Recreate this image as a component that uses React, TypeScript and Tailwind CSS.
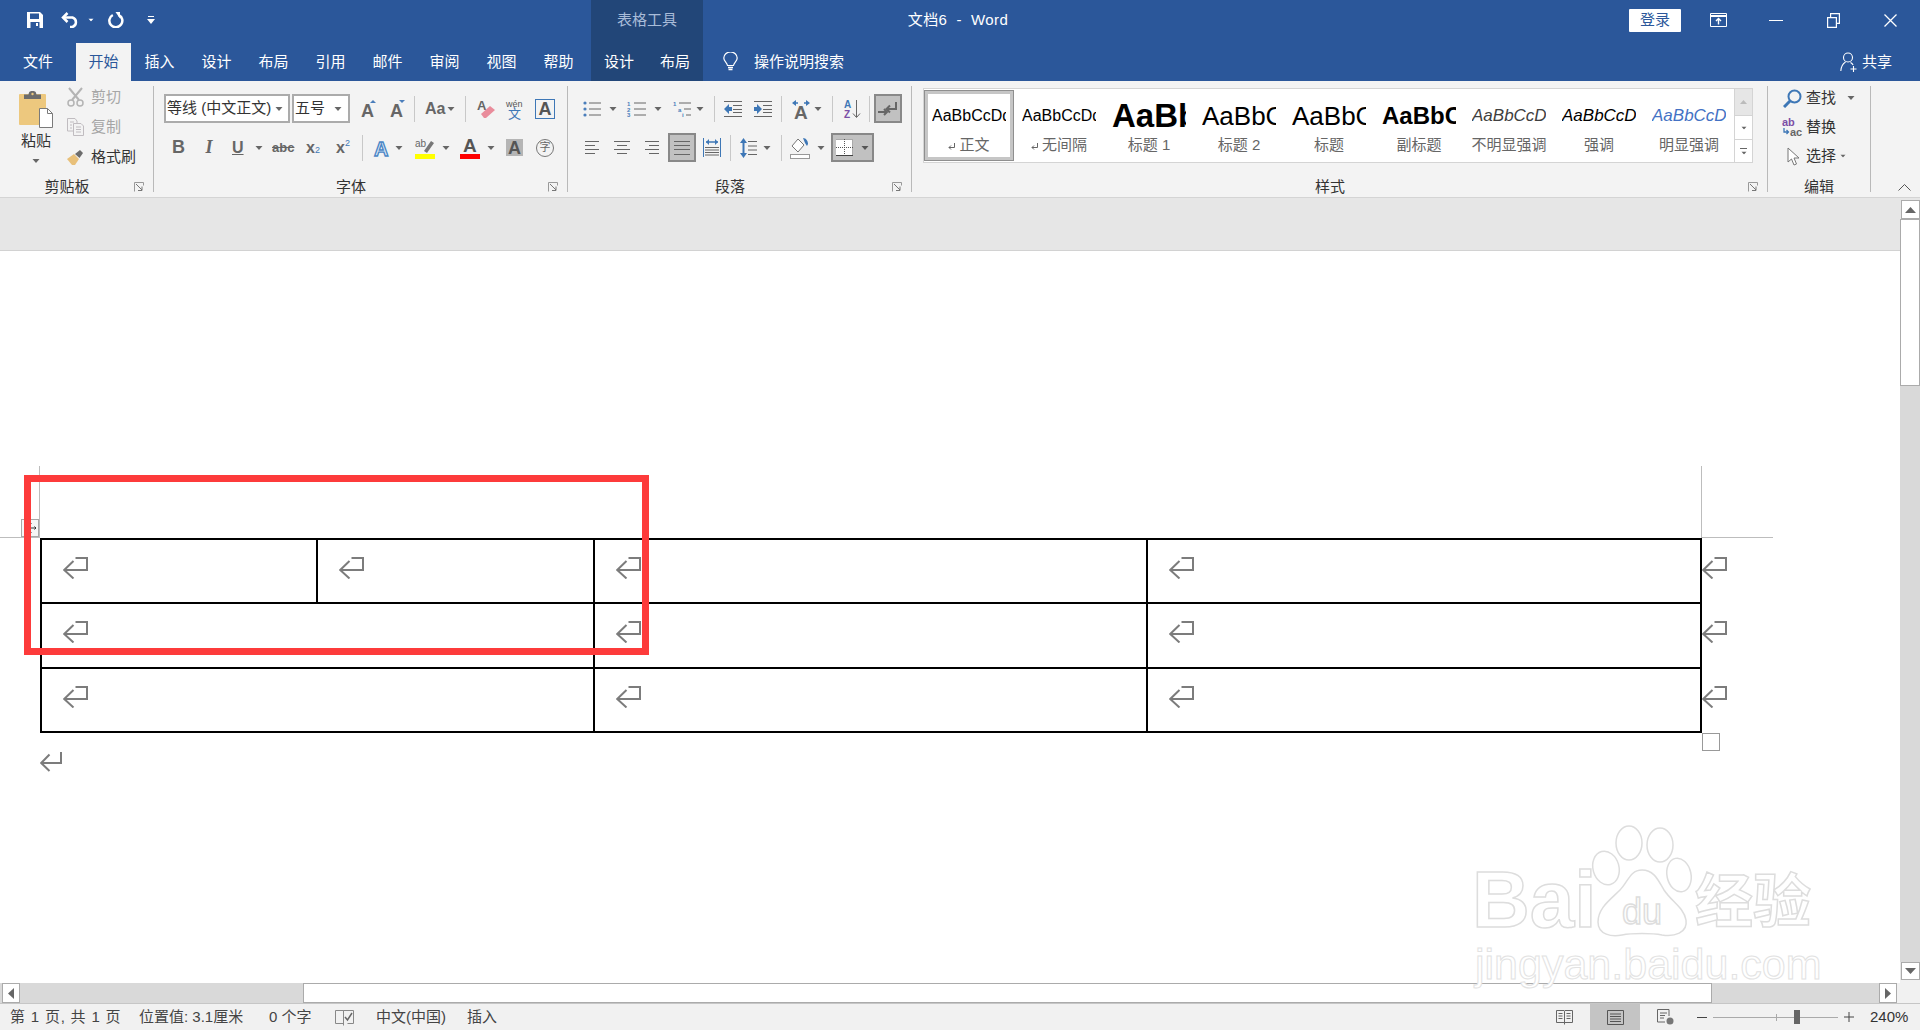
import React from "react";

type P = { className?: string };

const Caret = ({ className = "", color = "#666" }: P & { color?: string }) => (
  <svg className={`shrink-0 ${className}`} width="8" height="4" viewBox="0 0 8 4">
    <path d="M.5 0h7L4 4z" fill={color} />
  </svg>
);
const Sep = ({ className = "" }: P) => <div className={`w-px h-[26px] shrink-0 bg-[#c8c8c8] ${className}`} />;

const Launcher = () => (
  <div className="w-[19px] h-[14px] flex items-center shrink-0">
    <svg width="10" height="10" viewBox="0 0 10 10" fill="none" stroke="#777">
      <path d="M.5 9.500v-9h9v3" stroke="#999" />
      <path d="M2 2l6 6M8 4.500V8.500H4" />
    </svg>
  </div>
);

const Ret = ({ className = "" }: P) => (
  <svg className={`shrink-0 ${className}`} width="25" height="22" viewBox="0 0 25 22" fill="none" stroke="#7c7c7c" strokeWidth="2">
    <path d="M12.500 1H24V13H1" />
    <path d="M10.500 4L1.200 13l9.300 8.500" />
  </svg>
);

const Lines = ({ rows, w, h, color = "#666", className = "" }: P & { rows: [number, number, number][]; w: number; h: number; color?: string }) => (
  <svg className={`shrink-0 ${className}`} width={w} height={h} viewBox={`0 0 ${w} ${h}`} stroke={color} strokeWidth="1">
    {rows.map(([y, a, b], i) => (
      <path key={i} d={`M${a} ${y + 0.5}H${b}`} />
    ))}
  </svg>
);

const Letter = ({ ch = "A", size = 19, w = 14, h = 20, x, y = 17, fill = "#666", weight = "bold", extra }: { ch?: string; size?: number; w?: number; h?: number; x?: number; y?: number; fill?: string; weight?: string; extra?: React.ReactNode }) => (
  <svg className="shrink-0 overflow-visible" width={w} height={h} viewBox={`0 0 ${w} ${h}`}>
    <text x={x ?? 0} y={y} fontSize={size} fontWeight={weight} fill={fill} fontFamily="Liberation Sans">
      {ch}
    </text>
    {extra}
  </svg>
);

const Item = ({ preview, label, ret, selected }: { preview: React.ReactNode; label: string; ret?: boolean; selected?: boolean }) => (
  <div className={`w-[90px] h-[71px] shrink-0 flex flex-col items-center box-border ${selected ? "border border-[#8f8f8f] outline-[3px] outline-[#c6c6c6] outline-offset-[-4px] pt-[7px]" : "pt-[8px]"}`}>
    <div className="w-[74px] h-[36px] leading-[36px] overflow-hidden whitespace-nowrap text-black">{preview}</div>
    <div className="h-[20px] leading-[20px] mt-[1px] flex items-center text-[#666] text-[15px] whitespace-nowrap">
      {ret && (
        <svg className="mr-[4px] mt-[3px]" width="7" height="7" viewBox="0 0 7 7" fill="none" stroke="#666">
          <path d="M6.500 0v4.500H1M3 2.500L1 4.500 3 6.500" />
        </svg>
      )}
      {label}
    </div>
  </div>
);

export default function App() {
  return (
    <div className="relative w-[1920px] h-[1030px] overflow-hidden flex flex-col bg-white text-[15px] text-[#444] font-['Liberation_Sans','Noto_Sans_CJK_SC',sans-serif]">
      {/* Title bar */}
      <div className="h-[43px] shrink-0 flex items-start bg-[#2b579a] text-white">
        <div className="w-[591px] h-[40px] flex items-center shrink-0">
          <svg className="ml-[27px]" width="16" height="16" viewBox="0 0 16 16">
            <path fill="#fff" d="M0 0h13l3 3v13H0z" />
            <path fill="#2b579a" d="M3 1.500h9V7H3zM3.500 10h9v6h-9z" />
            <path fill="#fff" d="M9 11h2v3H9z" />
          </svg>
          <svg className="ml-[18px]" width="19" height="16" viewBox="0 0 19 16" fill="none" stroke="#fff" strokeWidth="2.500">
            <path d="M2 5.500h9.500a5 5 0 0 1 0 9.500H9" />
            <path d="M6.500 1L2 5.500 6.500 10" />
          </svg>
          <Caret className="ml-[7px] scale-75" color="#fff" />
          <svg className="ml-[13px]" width="16" height="16" viewBox="0 0 16 16" fill="none" stroke="#fff" strokeWidth="2.500">
            <path d="M4.800 3A6.500 6.500 0 1 0 10.500 2.800" />
            <path fill="#fff" stroke="none" d="M7.500 0h4.500v6.500z" />
          </svg>
          <svg className="ml-[23px]" width="8" height="8" viewBox="0 0 8 8" fill="#fff">
            <path d="M1 0h6v1H1zM0 3h8L4 8z" />
          </svg>
        </div>
        <div className="w-[112px] h-[43px] pb-[3px] shrink-0 bg-[#224678] flex items-center justify-center text-[#a9bcd8] text-[15px]">表格工具</div>
        <div className="w-[510px] h-[40px] shrink-0 flex items-center justify-center whitespace-pre text-[15px] tracking-[0.4px]">文档6  -  Word</div>
        <div className="flex-1 h-[40px] flex items-center justify-end">
          <div className="w-[52px] h-[23px] bg-white text-[#2b579a] rounded-[1px] flex items-center justify-center text-[15px]">登录</div>
          <svg className="ml-[29px]" width="17" height="14" viewBox="0 0 17 14" fill="none" stroke="#fff">
            <path d="M.5.500h16v13H.5z" />
            <path d="M.5 3h16" strokeWidth="2" />
            <path d="M8.500 11.500V6M6 8l2.500-2.500L11 8" strokeWidth="1.400" />
          </svg>
          <div className="ml-[42px] w-[14px] h-[1px] bg-white" />
          <svg className="ml-[44px]" width="13" height="15" viewBox="0 0 13 15" fill="none" stroke="#fff" strokeWidth="1.200">
            <path d="M.6 4.600h8.800v9.800H.6z" />
            <path d="M3.600 4.500V.6h8.800v9.800H9.500" />
          </svg>
          <svg className="ml-[44px] mr-[23px]" width="13" height="13" viewBox="0 0 13 13" stroke="#fff" strokeWidth="1.300">
            <path d="M.5.500l12 12M12.500.5l-12 12" />
          </svg>
        </div>
      </div>

      {/* Tabs */}
      <div className="h-[38px] shrink-0 flex items-stretch bg-[#2b579a] text-white text-[15px]">
        <div className="w-[76px] flex items-center justify-center">文件</div>
        <div className="w-[55px] flex items-center justify-center bg-[#f3f3f3] text-[#2b579a]">开始</div>
        <div className="w-[57px] flex items-center justify-center">插入</div>
        <div className="w-[57px] flex items-center justify-center">设计</div>
        <div className="w-[57px] flex items-center justify-center">布局</div>
        <div className="w-[57px] flex items-center justify-center">引用</div>
        <div className="w-[57px] flex items-center justify-center">邮件</div>
        <div className="w-[57px] flex items-center justify-center">审阅</div>
        <div className="w-[57px] flex items-center justify-center">视图</div>
        <div className="w-[57px] flex items-center justify-center">帮助</div>
        <div className="w-[4px]" />
        <div className="w-[112px] flex bg-[#224678]">
          <div className="w-[56px] flex items-center justify-center">设计</div>
          <div className="w-[56px] flex items-center justify-center">布局</div>
        </div>
        <svg className="ml-[20px] self-center" width="15" height="20" viewBox="0 0 15 20" fill="none" stroke="#fff" strokeWidth="1.200">
          <path d="M4.500 13.500C4 10.500.8 9.500.8 6a6.700 6 0 0 1 13.400 0c0 3.500-3.200 4.500-3.700 7.500z" />
          <path d="M5 15.500h5M5.500 17.500h4" strokeWidth="1.500" />
        </svg>
        <div className="ml-[16px] flex items-center">操作说明搜索</div>
        <div className="ml-auto mr-[28px] flex items-center">
          <svg width="18" height="20" viewBox="0 0 18 20" fill="none" stroke="#fff" strokeWidth="1.100">
            <circle cx="8" cy="5.500" r="4.500" />
            <path d="M5.500 10C2.500 12 1 15 .8 19M10.500 10.500c1 .5 2 1.500 2.600 2.500M13.500 14v6M10.500 17h6" />
          </svg>
          <span className="ml-[4px]">共享</span>
        </div>
      </div>

      {/* Ribbon */}
      <div className="h-[117px] shrink-0 flex py-[5px] bg-[#f3f3f3] border-b border-[#d4d4d4] box-border">
        {/* Clipboard */}
        <div className="w-[154px] h-[106px] shrink-0 flex flex-col border-r border-[#b9b9b9] box-border">
          <div className="flex h-[88px]">
            <div className="w-[67px] pl-[5px] flex flex-col items-center pt-[4px] shrink-0">
              <svg width="34" height="38" viewBox="0 0 34 38">
                <rect x="0" y="4" width="27" height="31" rx="1" fill="#edc87e" />
                <path d="M5 9V4.500h4.500C10 2 10.500 1 13.500 1s3.500 1 4 3.500H22V9z" fill="#6c6c6c" />
                <circle cx="13.500" cy="4" r="1.200" fill="#edc87e" />
                <path d="M20.500 18.500h8l5 5v14h-13z" fill="#fff" stroke="#7a7a7a" />
                <path d="M28.500 18.500v5h5" fill="none" stroke="#7a7a7a" />
              </svg>
              <div className="mt-[3px] h-[20px] leading-[20px] text-[#333]">粘贴</div>
              <Caret className="mt-[8px]" />
            </div>
            <div className="flex flex-col gap-[8px]">
              <div className="h-[22px] flex items-center text-[#a6a6a6]">
                <svg width="17" height="20" viewBox="0 0 17 20" fill="none" stroke="#b4b4b4" strokeWidth="1.500">
                  <path d="M2 1l10 12M15 1L5 13" strokeWidth="2" />
                  <circle cx="4" cy="16" r="3" />
                  <circle cx="13" cy="16" r="3" />
                </svg>
                <span className="ml-[7px]">剪切</span>
              </div>
              <div className="h-[22px] flex items-center text-[#a6a6a6]">
                <svg width="17" height="18" viewBox="0 0 17 18" fill="none" stroke="#c0bcc0">
                  <path d="M.5.500H8l2 2.500v10H.5z" />
                  <path d="M6.500 5.500H14l2.500 2.500v9.500h-10z" fill="#f3f3f3" />
                  <path d="M3 4h4M3 7h2M3 10h2M9 9h5M9 11.500h5M9 14h5" />
                </svg>
                <span className="ml-[7px]">复制</span>
              </div>
              <div className="h-[22px] flex items-center text-[#333]">
                <svg width="17" height="16" viewBox="0 0 17 16">
                  <path d="M0 10l7-5 5 5-4 6H5z" fill="#e8c07a" />
                  <path d="M8 5l5-4 3 3-3.500 5z" fill="#6c6c6c" />
                </svg>
                <span className="ml-[7px]">格式刷</span>
              </div>
            </div>
          </div>
          <div className="mt-auto -mb-[2px] h-[14px] flex items-center">
            <div className="flex-1 text-center leading-[14px] text-[#333]">剪贴板</div>
            <Launcher />
          </div>
        </div>

        {/* Font */}
        <div className="w-[414px] h-[106px] shrink-0 flex flex-col border-r border-[#b9b9b9] box-border">
          <div className="mt-[8px] h-[29px] flex items-center">
            <div className="ml-[10px] w-[126px] h-[29px] box-border border-2 border-[#ababab] bg-white flex items-center pl-[1px] pr-[5px] justify-between text-[#333] whitespace-nowrap">
              <span>等线 (中文正文)</span>
              <Caret />
            </div>
            <div className="ml-[2px] w-[58px] h-[29px] box-border border-2 border-[#ababab] bg-white flex items-center pl-[1px] pr-[6px] justify-between text-[#333]">
              <span>五号</span>
              <Caret />
            </div>
            <div className="ml-[11px]">
              <Letter extra={<path d="M9 4h6l-3-3z" fill="#4a7ebb" />} y={18} size={18} />
            </div>
            <div className="ml-[15px]">
              <Letter extra={<path d="M9 1h6l-3 3z" fill="#4a7ebb" />} y={18} size={18} />
            </div>
            <Sep className="ml-[10px]" />
            <div className="ml-[10px]">
              <Letter ch="Aa" size={16} w={18} y={15} />
            </div>
            <Caret className="ml-[4px]" />
            <Sep className="ml-[10px]" />
            <svg className="ml-[11px] overflow-visible" width="18" height="20" viewBox="0 0 18 20">
              <text x="0" y="11" fontSize="13" fontWeight="bold" fill="#666" fontFamily="Liberation Sans">A</text>
              <path d="M4 15l9-8 5 4-9 8H7z" fill="#e98c9b" />
            </svg>
            <svg className="ml-[11px] overflow-visible" width="17" height="20" viewBox="0 0 17 20">
              <text x="0" y="8" fontSize="9" fill="#555" fontFamily="Liberation Sans">wén</text>
              <text x="2" y="19" fontSize="13" fill="#3e77b6">文</text>
            </svg>
            <div className="ml-[12px] w-[20px] h-[20px] box-border border border-[#3e77b6] flex items-center justify-center text-[#555] text-[18px] font-bold leading-none">A</div>
          </div>
          <div className="mt-[10px] h-[29px] flex items-center text-[#666]">
            <div className="ml-[18px] w-[10px] text-center font-bold text-[18px] font-['Liberation_Sans']">B</div>
            <div className="ml-[22px] w-[10px] text-center italic font-bold text-[18px] font-['Liberation_Serif']">I</div>
            <div className="ml-[18px] w-[10px] text-center font-bold text-[16px] leading-[19px] underline font-['Liberation_Sans']">U</div>
            <Caret className="ml-[13px]" />
            <div className="ml-[9px] w-[20px] text-center text-[13px] font-bold line-through">abc</div>
            <div className="ml-[14px] w-[15px] flex items-baseline font-bold text-[16px]">x<span className="text-[9px] text-[#3e77b6] font-normal">2</span></div>
            <div className="ml-[15px] w-[15px] flex font-bold text-[16px] leading-[20px] h-[20px]">x<span className="text-[9px] leading-[10px] text-[#3e77b6] font-normal">2</span></div>
            <Sep className="ml-[11px]" />
            <svg className="ml-[10px] overflow-visible" width="16" height="20" viewBox="0 0 16 20">
              <text x="1" y="18" fontSize="20" fontWeight="bold" fill="#dce8f5" stroke="#4a86c5" strokeWidth="1.300" fontFamily="Liberation Sans">A</text>
            </svg>
            <Caret className="ml-[6px]" />
            <svg className="ml-[12px] overflow-visible" width="20" height="22" viewBox="0 0 20 22">
              <text x="0" y="10" fontSize="10" fill="#666" fontFamily="Liberation Sans">ab</text>
              <path d="M9 14l7-10 3 2-7 10z" fill="#777" />
              <rect x="0" y="17" width="20" height="5" fill="#ffff00" />
            </svg>
            <Caret className="ml-[7px]" />
            <svg className="ml-[10px] overflow-visible" width="20" height="22" viewBox="0 0 20 22">
              <text x="3" y="15" fontSize="19" fontWeight="bold" fill="#555" fontFamily="Liberation Sans">A</text>
              <rect x="0" y="17" width="20" height="5" fill="#ff0000" />
            </svg>
            <Caret className="ml-[7px]" />
            <div className="ml-[11px] w-[17px] h-[17px] bg-[#b5b5b5] flex items-center justify-center text-[#555] text-[18px] font-bold leading-none">A</div>
            <div className="ml-[13px] w-[18px] h-[18px] box-border rounded-full border border-[#777] flex items-center justify-center text-[#666] text-[11px] leading-none">字</div>
          </div>
          <div className="mt-auto -mb-[2px] h-[14px] flex items-center">
            <div className="flex-1 text-center leading-[14px] text-[#333]">字体</div>
            <Launcher />
          </div>
        </div>

        {/* Paragraph */}
        <div className="w-[344px] h-[106px] shrink-0 flex flex-col border-r border-[#b9b9b9] box-border">
          <div className="mt-[8px] h-[29px] flex items-center">
            <svg className="ml-[15px]" width="18" height="16" viewBox="0 0 18 16">
              <g fill="#4a7ebb"><circle cx="2" cy="2" r="1.600" /><circle cx="2" cy="8" r="1.600" /><circle cx="2" cy="14" r="1.600" /></g>
              <path d="M6 2h12M6 8h12M6 14h12" stroke="#666" />
            </svg>
            <Caret className="ml-[8px]" />
            <svg className="ml-[10px] overflow-visible" width="19" height="16" viewBox="0 0 19 16">
              <g fill="#4a7ebb" fontSize="6" fontWeight="bold" fontFamily="Liberation Sans"><text x="0" y="5">1</text><text x="0" y="11">2</text><text x="0" y="16">3</text></g>
              <path d="M7 2h12M7 8h12M7 14h12" stroke="#666" />
            </svg>
            <Caret className="ml-[8px]" />
            <svg className="ml-[11px] overflow-visible" width="18" height="16" viewBox="0 0 18 16">
              <g fill="#4a7ebb" fontSize="6" fontWeight="bold" fontFamily="Liberation Sans"><text x="0" y="5">1</text><text x="5" y="11">a</text><text x="9" y="16">i</text></g>
              <path d="M6 2h12M11 8h7M13 14h5" stroke="#666" />
            </svg>
            <Caret className="ml-[5px]" />
            <Sep className="ml-[10px]" />
            <svg className="ml-[9px]" width="18" height="16" viewBox="0 0 18 16">
              <path d="M0 8l5-5v3h3v4H5v3z" fill="#3e77b6" />
              <path d="M0 .5h18M9 4.500h9M9 8.500h9M9 11.500h9M0 15.500h18" stroke="#666" />
            </svg>
            <svg className="ml-[12px]" width="18" height="16" viewBox="0 0 18 16">
              <path d="M8 8L3 3v3H0v4h3v3z" fill="#3e77b6" />
              <path d="M0 .5h18M9 4.500h9M9 8.500h9M9 11.500h9M0 15.500h18" stroke="#666" />
            </svg>
            <Sep className="ml-[9px]" />
            <svg className="ml-[9px] overflow-visible" width="20" height="20" viewBox="0 0 20 20">
              <path d="M5 1L1 4l4 3zM15 1l4 3-4 3z" fill="#3e77b6" />
              <path d="M5 4h2M13 4h2" stroke="#3e77b6" strokeWidth="1.500" />
              <text x="3" y="20" fontSize="19" fontWeight="bold" fill="#666" fontFamily="Liberation Sans">A</text>
            </svg>
            <Caret className="ml-[3px]" />
            <Sep className="ml-[10px]" />
            <svg className="ml-[11px] overflow-visible" width="16" height="20" viewBox="0 0 16 20" fill="none">
              <text x="0" y="9" fontSize="10" fontWeight="bold" fill="#3e77b6" fontFamily="Liberation Sans">A</text>
              <text x="0" y="19" fontSize="10" fontWeight="bold" fill="#7b4fa6" fontFamily="Liberation Sans">Z</text>
              <path d="M12.500 1v17M9 14.500l3.500 4 3.500-4" stroke="#666" />
            </svg>
            <Sep className="ml-[9px]" />
            <div className="ml-[4px] w-[28px] h-[29px] box-border border-2 border-[#888] bg-[#c1c1c1] flex items-center justify-center">
              <svg width="20" height="14" viewBox="0 0 20 14" fill="none" stroke="#666" strokeWidth="2">
                <path d="M18 0v7H9M12 3.500L8.500 7 12 10.500" />
                <path d="M0 10h9M6 7l3 3-3 3" />
              </svg>
            </div>
          </div>
          <div className="mt-[10px] h-[29px] flex items-center">
            <Lines className="ml-[17px]" w={14} h={13} rows={[[0, 0, 14], [4, 0, 10], [8, 0, 14], [12, 0, 10]]} />
            <Lines className="ml-[15px]" w={16} h={13} rows={[[0, 0, 16], [4, 3, 13], [8, 0, 16], [12, 3, 13]]} />
            <Lines className="ml-[15px]" w={14} h={13} rows={[[0, 0, 14], [4, 4, 14], [8, 0, 14], [12, 4, 14]]} />
            <div className="ml-[9px] w-[28px] h-[29px] box-border border-2 border-[#888] bg-[#c1c1c1] flex items-center justify-center">
              <Lines w={16} h={14} rows={[[0, 0, 16], [4, 0, 16], [8, 0, 16], [13, 0, 16]]} />
            </div>
            <svg className="ml-[7px]" width="18" height="19" viewBox="0 0 18 19">
              <path d="M.5 0v19M17.500 0v19" stroke="#3e77b6" />
              <path d="M3 4h12" stroke="#3e77b6" strokeWidth="1.500" />
              <path d="M3 4l3-3v6zM15 4l-3-3v6z" fill="#3e77b6" />
              <path d="M2 9.500h14M2 12h14M2 14.500h14M2 17h14" stroke="#666" />
            </svg>
            <Sep className="ml-[9px]" />
            <svg className="ml-[9px]" width="17" height="20" viewBox="0 0 17 20">
              <path d="M3.500 0l3.500 5H0zM3.500 20L0 15h7z" fill="#3e77b6" />
              <path d="M3.500 4v12" stroke="#3e77b6" strokeWidth="2" />
              <path d="M8 3.500h9M8 8h9M8 12h9M8 16.500h9" stroke="#666" />
            </svg>
            <Caret className="ml-[6px]" />
            <Sep className="ml-[10px]" />
            <svg className="ml-[8px]" width="20" height="22" viewBox="0 0 20 22" fill="none">
              <path d="M8 2L2 9l6 6 6-7z" fill="#fff" stroke="#777" />
              <path d="M13 1c3 0 5 3 5 6l-1 2-2-3z" fill="#3e77b6" />
              <rect x=".5" y="17.500" width="19" height="4" fill="#fff" stroke="#999" />
            </svg>
            <Caret className="ml-[7px]" />
            <div className="ml-[6px] w-[43px] h-[29px] box-border border-2 border-[#888] bg-[#c1c1c1] flex items-center pl-[3px]">
              <svg width="17" height="17" viewBox="0 0 17 17">
                <rect width="17" height="16" fill="#fff" />
                <path d="M.5.500h16v16h-16M8.500 0v17M0 8.500h17" stroke="#555" strokeDasharray="1 1" fill="none" />
                <path d="M0 16.500h17" stroke="#444" />
              </svg>
              <Caret className="ml-[8px]" color="#555" />
            </div>
          </div>
          <div className="mt-auto -mb-[2px] h-[14px] flex items-center">
            <div className="flex-1 text-center leading-[14px] text-[#333]">段落</div>
            <Launcher />
          </div>
        </div>

        {/* Styles */}
        <div className="w-[856px] h-[106px] shrink-0 flex flex-col border-r border-[#b9b9b9] box-border">
          <div className="ml-[11px] mt-[2px] w-[830px] h-[75px] box-border border border-[#d4d4d4] bg-white flex pt-[1px]">
            <Item selected label="正文" ret preview={<span className="text-[16px]">AaBbCcDd</span>} />
            <Item label="无间隔" ret preview={<span className="text-[16px]">AaBbCcDd</span>} />
            <Item label="标题 1" preview={<span className="text-[33px] font-bold">AaBb</span>} />
            <Item label="标题 2" preview={<span className="text-[26px]">AaBbC</span>} />
            <Item label="标题" preview={<span className="text-[26px]">AaBbC</span>} />
            <Item label="副标题" preview={<span className="text-[24px] font-bold">AaBbC</span>} />
            <Item label="不明显强调" preview={<span className="text-[17px] italic text-[#404040]">AaBbCcDd</span>} />
            <Item label="强调" preview={<span className="text-[17px] italic">AaBbCcDd</span>} />
            <Item label="明显强调" preview={<span className="text-[17px] italic text-[#4472c4]">AaBbCcDd</span>} />
            <div className="ml-auto w-[18px] -mt-px flex flex-col shrink-0 border-l border-[#d4d4d4]">
              <div className="h-[26px] bg-[#e6e6e6] flex items-center justify-center"><svg width="7" height="4" viewBox="0 0 7 4"><path d="M0 4h7L3.500 0z" fill="#bbb" /></svg></div>
              <div className="h-[24px] border-t border-[#d4d4d4] flex items-center justify-center"><Caret className="scale-75" /></div>
              <div className="flex-1 border-t border-[#d4d4d4] flex flex-col items-center justify-center">
                <div className="w-[7px] h-px bg-[#666] mb-[2px]" />
                <Caret className="scale-75" />
              </div>
            </div>
          </div>
          <div className="mt-auto -mb-[2px] h-[14px] flex items-center">
            <div className="flex-1 text-center leading-[14px] text-[#333]">样式</div>
            <Launcher />
          </div>
        </div>

        {/* Editing */}
        <div className="w-[103px] h-[106px] shrink-0 flex flex-col border-r border-[#b9b9b9] box-border text-[#333]">
          <div className="flex flex-col gap-[5px]">
            <div className="h-[24px] flex items-center">
              <svg className="ml-[15px]" width="19" height="19" viewBox="0 0 19 19" fill="none">
                <circle cx="11.500" cy="7.500" r="6" stroke="#3e77b6" strokeWidth="2" />
                <path d="M7 12l-6 6" stroke="#3e77b6" strokeWidth="3" />
              </svg>
              <span className="ml-[4px]">查找</span>
              <Caret className="ml-[11px]" />
            </div>
            <div className="h-[24px] flex items-center">
              <svg className="ml-[14px] overflow-visible" width="20" height="20" viewBox="0 0 20 20">
                <text x="0" y="9" fontSize="11" fontWeight="bold" fill="#7b4fa6" fontFamily="Liberation Sans">ab</text>
                <text x="8" y="19" fontSize="11" fontWeight="bold" fill="#666" fontFamily="Liberation Sans">ac</text>
                <path d="M2 11v4h4M4.500 13l2 2-2 2" stroke="#3e77b6" fill="none" strokeWidth="1.300" />
              </svg>
              <span className="ml-[4px]">替换</span>
            </div>
            <div className="h-[24px] flex items-center">
              <svg className="ml-[19px]" width="13" height="19" viewBox="0 0 13 19" fill="#fff" stroke="#777">
                <path d="M1 1v14l3.500-3 2.500 6 2.500-1-2.500-6H12z" />
              </svg>
              <span className="ml-[6px]">选择</span>
              <Caret className="ml-[3px] scale-75" />
            </div>
          </div>
          <div className="mt-auto -mb-[2px] h-[14px] leading-[14px] text-center">编辑</div>
        </div>
        <div className="flex-1 flex items-end pb-[1px]">
          <svg className="ml-[27px]" width="13" height="7" viewBox="0 0 13 7" fill="none" stroke="#555">
            <path d="M.5 6.500l6-6 6 6" />
          </svg>
        </div>
      </div>

      {/* Document + vertical scrollbar */}
      <div className="h-[785px] shrink-0 flex">
        <div className="relative flex-1 flex flex-col">
          <div className="h-[53px] shrink-0 bg-[#e6e6e6] border-b border-[#d2d2d2] box-border" />
          <div className="pt-[287px] flex flex-col">
            <div className="flex">
              <div className="ml-[40px] w-[1662px] shrink-0 box-border border-t-2 border-l-2 border-black grid grid-cols-[276px_277px_553px_554px] grid-rows-[64px_65px_64px]">
                <div className="border-r-2 border-b-2 border-black pl-[21px] pt-[17px] box-border"><Ret /></div>
                <div className="border-r-2 border-b-2 border-black pl-[21px] pt-[17px] box-border"><Ret /></div>
                <div className="border-r-2 border-b-2 border-black pl-[21px] pt-[17px] box-border"><Ret /></div>
                <div className="border-r-2 border-b-2 border-black pl-[21px] pt-[17px] box-border"><Ret /></div>
                <div className="col-span-2 border-r-2 border-b-2 border-black pl-[21px] pt-[17px] box-border"><Ret /></div>
                <div className="border-r-2 border-b-2 border-black pl-[21px] pt-[17px] box-border"><Ret /></div>
                <div className="border-r-2 border-b-2 border-black pl-[21px] pt-[17px] box-border"><Ret /></div>
                <div className="col-span-2 border-r-2 border-b-2 border-black pl-[21px] pt-[17px] box-border"><Ret /></div>
                <div className="border-r-2 border-b-2 border-black pl-[21px] pt-[17px] box-border"><Ret /></div>
                <div className="border-r-2 border-b-2 border-black pl-[21px] pt-[17px] box-border"><Ret /></div>
              </div>
              <div className="pt-[2px] flex flex-col">
                <div className="h-[64px] pt-[17px]"><Ret /></div>
                <div className="h-[65px] pt-[17px]"><Ret /></div>
                <div className="h-[64px] pt-[17px]"><Ret /></div>
              </div>
            </div>
            <div className="flex items-start">
              <svg className="ml-[40px] mt-[19px]" width="22" height="20" viewBox="0 0 22 20" fill="none" stroke="#7c7c7c" strokeWidth="2">
                <path d="M21 0V11H1" />
                <path d="M9.500 2.500L1.200 11l8.300 8" />
              </svg>
              <div className="ml-[1640px] w-[18px] h-[18px] box-border border border-[#999] bg-white" />
            </div>
          </div>

          {/* page margin crop marks */}
          <div className="absolute left-[39px] top-[268px] w-px h-[71px] bg-[#bdbdbd]" />
          <div className="absolute left-0 top-[339px] w-[40px] h-px bg-[#bdbdbd]" />
          <div className="absolute left-[1701px] top-[268px] w-px h-[71px] bg-[#bdbdbd]" />
          <div className="absolute left-[1701px] top-[339px] w-[72px] h-px bg-[#bdbdbd]" />
          {/* table move handle */}
          <div className="absolute left-[21px] top-[321px] w-[18px] h-[18px] box-border border border-[#a8a8a8] bg-[#f6f6f6] flex items-center justify-center">
            <svg width="12" height="12" viewBox="0 0 12 12" stroke="#333" fill="none">
              <path d="M6 0v12M0 6h12M4.500 1.500L6 0l1.500 1.500M4.500 10.500L6 12l1.500-1.500M10.500 4.500L12 6l-1.500 1.500M1.500 4.500L0 6l1.500 1.500" />
            </svg>
          </div>
          {/* red annotation */}
          <div className="absolute left-[24px] top-[277px] w-[625px] h-[180px] box-border border-[7px] border-[#fd3b3b]" />
        </div>

        {/* Vertical scrollbar */}
        <div className="w-[20px] shrink-0 flex flex-col items-center bg-[#e6e6e6]">
          <div className="mt-[2px] w-[19px] h-[19px] box-border border border-[#ababab] bg-white flex items-center justify-center shrink-0">
            <svg width="11" height="6" viewBox="0 0 11 6"><path d="M0 6h11L5.500 0z" fill="#666" /></svg>
          </div>
          <div className="w-[20px] h-[167px] box-border border border-[#ababab] bg-white shrink-0" />
          <div className="flex-1 w-full bg-[#d9d9d9]" />
          <div className="w-[19px] h-[18px] box-border border border-[#ababab] bg-white flex items-center justify-center shrink-0">
            <svg width="11" height="6" viewBox="0 0 11 6"><path d="M0 0h11L5.500 6z" fill="#666" /></svg>
          </div>
          <div className="h-[3px] w-full bg-[#f1f1f1] shrink-0" />
        </div>
      </div>

      {/* Horizontal scrollbar */}
      <div className="h-[20px] shrink-0 flex items-stretch bg-[#d9d9d9]">
        <div className="ml-[2px] w-[18px] box-border border border-[#ababab] bg-white flex items-center justify-center shrink-0">
          <svg width="6" height="11" viewBox="0 0 6 11"><path d="M6 0v11L0 5.500z" fill="#666" /></svg>
        </div>
        <div className="w-[283px] shrink-0" />
        <div className="w-[1409px] box-border border border-[#ababab] bg-white shrink-0" />
        <div className="w-[167px] shrink-0" />
        <div className="w-[18px] box-border border border-[#ababab] bg-white flex items-center justify-center shrink-0">
          <svg width="6" height="11" viewBox="0 0 6 11"><path d="M0 0v11L6 5.500z" fill="#666" /></svg>
        </div>
        <div className="flex-1 bg-[#f1f1f1]" />
      </div>

      {/* Status bar */}
      <div className="h-[27px] shrink-0 flex items-center bg-[#f1f1f1] border-t border-[#c6c6c6] box-border text-[#444] text-[15px] whitespace-nowrap">
        <div className="w-[139px] pl-[10px] shrink-0 tracking-[0.8px]">第 1 页, 共 1 页</div>
        <div className="w-[130px] shrink-0">位置值: 3.1厘米</div>
        <div className="w-[66px] shrink-0">0 个字</div>
        <div className="w-[41px] shrink-0">
          <svg width="19" height="17" viewBox="0 0 19 17" fill="none" stroke="#888">
            <path d="M.5 1.500h8v13h-8zM8.500 1.500h10v13h-6M8.500 1.500v15" />
            <path d="M10 8l2.500 3L17 4" stroke="#666" strokeWidth="1.500" />
          </svg>
        </div>
        <div className="w-[91px] shrink-0">中文(中国)</div>
        <div>插入</div>
        <div className="ml-auto flex items-center h-full">
          <svg width="17" height="16" viewBox="0 0 17 16" fill="none" stroke="#666">
            <path d="M.5 1.500h7.500l.5 1 .5-1h7.500v12H.5zM8.500 2.500v13M2.500 4.500h4M2.500 7h4M2.500 9.500h4M10.500 4.500h4M10.500 7h4M10.500 9.500h4" />
          </svg>
          <div className="ml-[17px] w-[50px] h-full bg-[#c4c4c4] flex items-center justify-center">
            <svg width="17" height="15" viewBox="0 0 17 15" fill="none" stroke="#555">
              <path d="M.5.500h16v14H.5zM3 4h11M3 6.500h11M3 9h11M3 11.500h11" />
            </svg>
          </div>
          <svg className="ml-[17px]" width="17" height="16" viewBox="0 0 17 16" fill="none" stroke="#666">
            <path d="M8 13H.5V.5H12V7M3 4h7M3 6.500h5M3 9h4" />
            <circle cx="13" cy="12" r="3.500" fill="#777" stroke="none" />
          </svg>
          <div className="ml-[23px] w-[10px] h-px bg-[#444]" />
          <div className="ml-[6px] w-[125px] h-px bg-[#aaa] flex items-center">
            <div className="ml-[63px] w-px h-[7px] bg-[#aaa] shrink-0" />
            <div className="ml-[17px] w-[6px] h-[14px] bg-[#666] shrink-0" />
          </div>
          <svg className="ml-[6px]" width="10" height="10" viewBox="0 0 10 10" stroke="#444">
            <path d="M0 5h10M5 0v10" />
          </svg>
          <div className="ml-[16px] mr-[11px] w-[39px] text-[#333]">240%</div>
        </div>
      </div>

      {/* Baidu watermark */}
      <div className="absolute left-[1472px] top-[866px] h-[68px] text-white font-bold text-[80px] leading-[68px] [-webkit-text-stroke:1.500px_#dddddd]">Bai</div>
      <svg className="absolute left-[1590px] top-[820px]" width="110" height="120" viewBox="0 0 110 120" fill="#fff" stroke="#dddddd" strokeWidth="1.500">
        <ellipse cx="39" cy="23" rx="13" ry="17" />
        <ellipse cx="70" cy="25" rx="13" ry="17" />
        <ellipse cx="16" cy="48" rx="13" ry="17" transform="rotate(-15 16 48)" />
        <ellipse cx="89" cy="55" rx="12" ry="17" transform="rotate(-12 89 55)" />
        <path d="M52 50C40 50 38 62 30 70 20 80 8 88 8 102c0 13 14 15 24 13 10-2 30-2 40 0 12 2 26-2 24-15-2-12-14-18-22-30-6-10-10-20-22-20z" />
        <text x="52" y="104" textAnchor="middle" fontSize="36" fontFamily="Liberation Sans">du</text>
      </svg>
      <div className="absolute left-[1695px] top-[868px] h-[68px] text-white font-bold text-[58px] leading-[68px] [-webkit-text-stroke:1.500px_#dddddd]">经验</div>
      <div className="absolute left-[1475px] top-[940px] h-[48px] text-white text-[43px] leading-[48px] [-webkit-text-stroke:1px_#e2e2e2]">jingyan.baidu.com</div>
    </div>
  );
}
